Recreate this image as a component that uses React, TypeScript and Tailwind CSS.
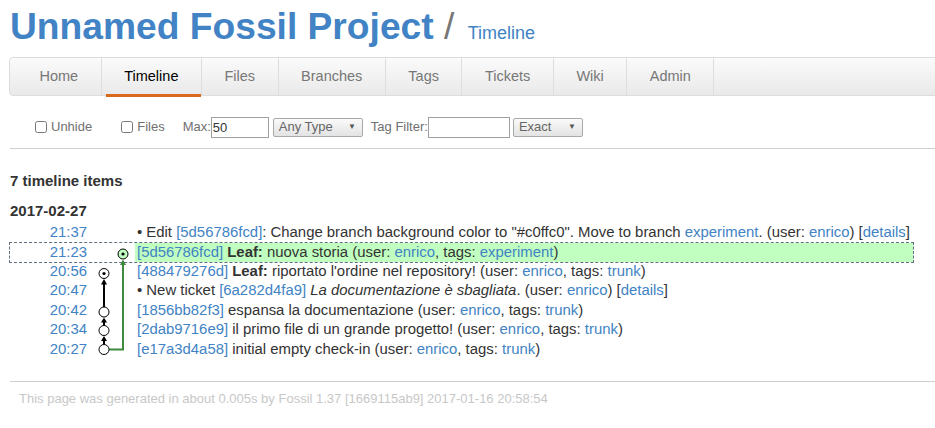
import React from 'react';

const font = { fontFamily: '"Liberation Sans", Arial, Helvetica, sans-serif' };

const tabs = ['Home', 'Timeline', 'Files', 'Branches', 'Tags', 'Tickets', 'Wiki', 'Admin'];

const L: React.FC<{ children: React.ReactNode }> = ({ children }) => (
    <a href="#" className="text-[#4183c4]">{children}</a>
);

interface RowProps {
    time: string;
    highlight?: boolean;
    children: React.ReactNode;
}

const Row: React.FC<RowProps> = ({ time, highlight, children }) => (
    <div
        className={
            highlight
                ? 'flex h-[19.4px] leading-[19.4px] outline outline-1 outline-dashed outline-[#607080]'
                : 'flex h-[19.4px] leading-[19.4px]'
        }
    >
        <div className="w-[77px] shrink-0 text-right">
            <L>{time}</L>
        </div>
        <div className="w-[48px] shrink-0" />
        <div className={highlight ? 'flex-1 pl-[2px] whitespace-nowrap bg-[#c0ffc0]' : 'flex-1 pl-[2px] whitespace-nowrap'}>
            {children}
        </div>
    </div>
);

// commit graph, coordinates relative to the rows block
const Graph: React.FC = () => {
    const black = '#000';
    const green = '#3f8a3f';
    return (
        <svg className="absolute left-0 top-0 pointer-events-none" width="140" height="136" viewBox="0 0 140 136">
            {/* black rail */}
            <line x1="94" y1="84" x2="94" y2="61" stroke={black} strokeWidth="2" />
            <polygon points="94,56 91,61.5 97,61.5" fill={black} />
            <line x1="94" y1="102.5" x2="94" y2="98.5" stroke={black} strokeWidth="2" />
            <polygon points="94,94.5 91,99.5 97,99.5" fill={black} />
            <line x1="94" y1="121.5" x2="94" y2="117.5" stroke={black} strokeWidth="2" />
            <polygon points="94,113 91,118 97,118" fill={black} />
            {/* green rail */}
            <polyline points="99,126.5 113,126.5 113,41.5" fill="none" stroke={green} strokeWidth="2" />
            <polygon points="113,36.5 110,42 116,42" fill={green} />
            {/* nodes */}
            <circle cx="113" cy="31" r="5" fill="#c0ffc0" stroke={black} strokeWidth="1" />
            <circle cx="113" cy="31" r="1.6" fill={black} />
            <circle cx="94" cy="50.5" r="5" fill="#fff" stroke={black} strokeWidth="1" />
            <circle cx="94" cy="50.5" r="1.6" fill={black} />
            <circle cx="94" cy="89" r="5" fill="#fff" stroke={black} strokeWidth="1" />
            <circle cx="94" cy="107.5" r="5" fill="#fff" stroke={black} strokeWidth="1" />
            <circle cx="94" cy="126.5" r="5" fill="#fff" stroke={black} strokeWidth="1" />
        </svg>
    );
};

const FakeSelect: React.FC<{ label: string; width: string }> = ({ label, width }) => (
    <div
        className={`${width} h-[19px] flex items-center justify-between pl-[5px] pr-[6px] border border-[#a9a9a9] rounded-[2px] bg-gradient-to-b from-[#fafafa] to-[#e3e3e3] text-[13px] text-[#666]`}
    >
        <span>{label}</span>
        <span className="text-[8px] text-[#555]">▼</span>
    </div>
);

export default function App() {
    return (
        <div className="w-[935px] h-[428px] overflow-hidden bg-white text-[#333]" style={font}>
            {/* Title */}
            <div className="pl-[10px] pt-[8px] text-[37.2px] leading-none whitespace-nowrap">
                <span className="font-bold text-[#4183c4]">Unnamed Fossil Project</span>
                <span className="text-[#777]"> / </span>
                <span className="ml-[3px] text-[18px] text-[#4183c4]">Timeline</span>
            </div>

            {/* Main menu */}
            <div className="mt-[12px] ml-[9px] -mr-[20px] h-[39px] flex pl-[7px] border border-[#dcdcdc] rounded-[4px] bg-gradient-to-b from-[#fbfbfb] to-[#e9e9e9]">
                {tabs.map((t) => (
                    <div
                        key={t}
                        className={
                            t === 'Timeline'
                                ? 'relative flex items-center px-[22.5px] border-r border-[#dedede] text-[14.5px] text-black'
                                : 'relative flex items-center px-[22.5px] border-r border-[#dedede] text-[14.5px] text-[#777]'
                        }
                    >
                        {t}
                        {t === 'Timeline' && (
                            <span className="absolute left-[4px] right-0 bottom-[-2px] h-[3px] bg-[#d8681c]" />
                        )}
                    </div>
                ))}
            </div>

            {/* Filter form */}
            <div className="mt-[20px] ml-[10px] h-[22px] flex items-center text-[13px] text-[#707070] whitespace-nowrap">
                <input type="checkbox" className="m-0 ml-[25px] w-[12px] h-[12px]" />
                <span className="ml-[4px]">Unhide</span>
                <input type="checkbox" className="m-0 ml-[29px] w-[12px] h-[12px]" />
                <span className="ml-[4px]">Files</span>
                <span className="ml-[18px]">Max:</span>
                <div className="ml-0 w-[58px] h-[21px] border border-[#a0a0a0] px-[1px] leading-[19px] text-[#333]">50</div>
                <div className="ml-[4px]">
                    <FakeSelect label="Any Type" width="w-[90px]" />
                </div>
                <span className="ml-[8px]">Tag Filter:</span>
                <div className="ml-0 w-[82px] h-[21px] border border-[#a0a0a0]" />
                <div className="ml-[3px]">
                    <FakeSelect label="Exact" width="w-[70px]" />
                </div>
            </div>

            <div className="mt-[10px] ml-[10px] border-t border-[#cfcfcf]" />

            {/* Timeline */}
            <div className="ml-[10px] mt-[24px] text-[15px] font-bold leading-[15px] text-[#333]">7 timeline items</div>
            <div className="ml-[10px] mt-[15px] text-[15px] font-bold leading-[15px] text-[#333]">2017-02-27</div>

            <div className="relative ml-[10px] mt-[5px] w-[903px] text-[14.9px] text-[#333]">
                <Row time="21:37">
                    • Edit <L>[5d56786fcd]</L>: Change branch background color to "#c0ffc0". Move to branch{' '}
                    <L>experiment</L>. (user: <L>enrico</L>) [<L>details</L>]
                </Row>
                <Row time="21:23" highlight>
                    <L>[5d56786fcd]</L> <b>Leaf:</b> nuova storia (user: <L>enrico</L>, tags: <L>experiment</L>)
                </Row>
                <Row time="20:56">
                    <L>[488479276d]</L> <b>Leaf:</b> riportato l'ordine nel repository! (user: <L>enrico</L>, tags:{' '}
                    <L>trunk</L>)
                </Row>
                <Row time="20:47">
                    • New ticket <L>[6a282d4fa9]</L> <i>La documentazione è sbagliata</i>. (user: <L>enrico</L>) [
                    <L>details</L>]
                </Row>
                <Row time="20:42">
                    <L>[1856bb82f3]</L> espansa la documentazione (user: <L>enrico</L>, tags: <L>trunk</L>)
                </Row>
                <Row time="20:34">
                    <L>[2dab9716e9]</L> il primo file di un grande progetto! (user: <L>enrico</L>, tags: <L>trunk</L>)
                </Row>
                <Row time="20:27">
                    <L>[e17a3d4a58]</L> initial empty check-in (user: <L>enrico</L>, tags: <L>trunk</L>)
                </Row>
                <Graph />
            </div>

            {/* Footer */}
            <div className="mt-[22px] ml-[10px] border-t border-[#cfcfcf]" />
            <div className="ml-[19px] mt-[7px] text-[13px] text-[#c8c8c8] whitespace-nowrap">
                This page was generated in about 0.005s by Fossil 1.37 [1669115ab9] 2017-01-16 20:58:54
            </div>
        </div>
    );
}
